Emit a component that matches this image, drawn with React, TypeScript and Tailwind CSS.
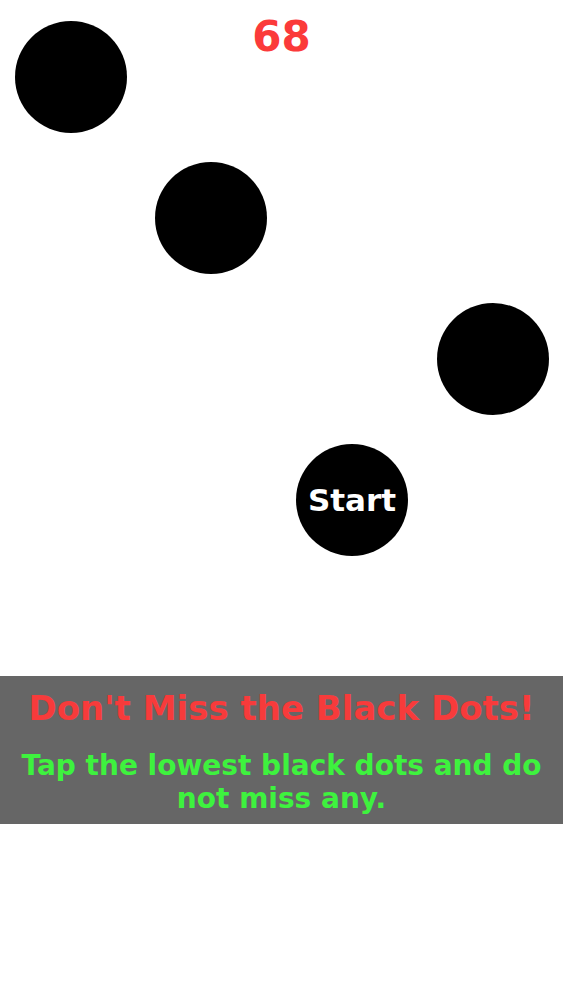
import React from "react";

type Dot = { col: number; top: number; label?: string };

// columns are a quarter of the board; dots drift down in rows of 141px
const dots: Dot[] = [
  { col: 0, top: 21 },
  { col: 1, top: 162 },
  { col: 3, top: 303 },
  { col: 2, top: 444, label: "Start" },
];

const colLeft = ["left-[15px]", "left-[155px]", "left-[296px]", "left-[437px]"];

export default function App() {
  const score = 68;

  return (
    <div className="w-[563px] h-[1000px] bg-white overflow-hidden font-['DejaVu_Sans',sans-serif]">
      <div className="relative h-[676px]">
        <div className="absolute top-[12px] left-0 right-0 text-center text-[42px] leading-[50px] font-bold text-[#fb3a3a]">
          {score}
        </div>
        {dots.map((d, i) => (
          <button
            key={i}
            style={{ top: d.top }}
            className={`absolute ${colLeft[d.col]} w-[112px] h-[112px] rounded-full bg-black flex items-center justify-center text-white text-[31px] font-bold`}
          >
            {d.label}
          </button>
        ))}
      </div>

      <div className="bg-[#666666] h-[148px] flex flex-col items-center pt-[12px] px-[8px] text-center font-bold">
        <h1 className="text-[34px] leading-[40px] text-[#f73b3b] whitespace-nowrap">Don't Miss the Black Dots!</h1>
        <p className="mt-[21px] text-[28px] leading-[33px] text-[#3ef23e]">
          Tap the lowest black dots and do not miss any.
        </p>
      </div>
    </div>
  );
}
